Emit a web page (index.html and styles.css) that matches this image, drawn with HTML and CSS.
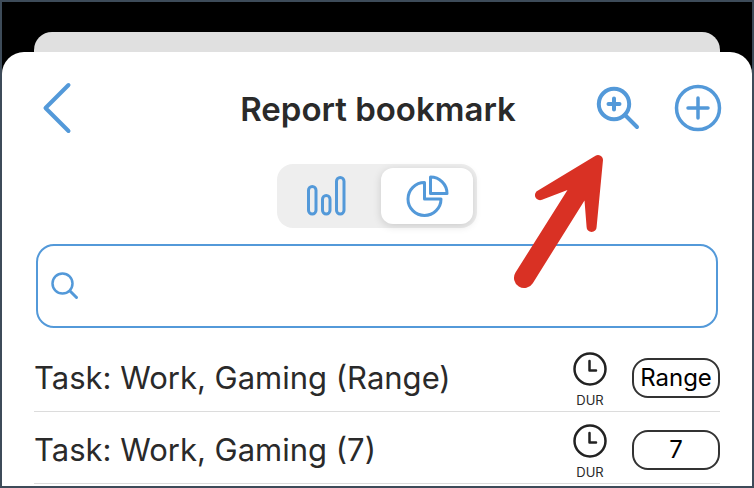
FILE: index.html
```html
<!DOCTYPE html>
<html lang="en">
  <head>
    <meta charset="UTF-8" />
    <meta name="viewport" content="width=device-width, initial-scale=1.0" />
    <title>Report bookmark</title>
    <link rel="stylesheet" href="styles.css">
  </head>
  <body>
    <div class="back-sheet"></div>
    <main class="sheet">
      <header class="header">
        <div class="header-side">
          <button class="icon-btn" aria-label="Back">
            <svg width="44" height="52" viewBox="0 0 44 52"><path d="M34.500 3 11.500 26l23 23" stroke-width="4" /></svg>
          </button>
        </div>
        <h1 class="title">Report bookmark</h1>
        <div class="header-side header-actions">
          <button class="icon-btn" aria-label="Zoom in">
            <svg width="44" height="44" viewBox="0 0 44 44">
              <circle cx="18" cy="18" r="15.200" stroke-width="4" />
              <path d="M18 12.500v11M12.500 18h11M29 29l12 12" stroke-width="4" />
            </svg>
          </button>
          <button class="icon-btn" aria-label="Add">
            <svg width="48" height="48" viewBox="0 0 48 48">
              <circle cx="24" cy="24" r="21.500" stroke-width="3.500" />
              <path d="M24 14v20M14 24h20" stroke-width="3.500" />
            </svg>
          </button>
        </div>
      </header>

      <div class="segment" role="radiogroup" aria-label="Chart type">
        <label class="segment-item">
          <input type="radio" name="chart" aria-label="Bar chart">
          <svg width="44" height="44" viewBox="0 0 44 44">
            <rect x="3.500" y="12.500" width="7.500" height="27.500" rx="3.750" stroke-width="3" />
            <rect x="17.500" y="21.500" width="7.500" height="18.500" rx="3.750" stroke-width="3" />
            <rect x="31.500" y="3.500" width="7.500" height="36.500" rx="3.750" stroke-width="3" />
          </svg>
        </label>
        <label class="segment-item">
          <input type="radio" name="chart" aria-label="Pie chart" checked>
          <svg width="44" height="44" viewBox="0 0 44 44">
            <path d="M19.500 8.500a16.500 16.500 0 1 0 16.500 16.500H19.500z" stroke-width="3" />
            <path d="M25.500 3v16.500h16.500a16.500 16.500 0 0 0-16.500-16.500z" stroke-width="3" />
          </svg>
        </label>
      </div>

      <label class="search">
        <svg width="30" height="30" viewBox="0 0 30 30">
          <circle cx="12.500" cy="12.500" r="10" stroke-width="2.500" />
          <path d="m20 20 6.500 6.500" stroke-width="3" />
        </svg>
        <input type="text" class="search-input" aria-label="Search">
      </label>

      <ul class="list">
        <li class="row">
          <span class="name">Task: Work, Gaming (Range)</span>
          <span class="duration">
            <svg width="36" height="36" viewBox="0 0 36 36">
              <circle cx="18" cy="18" r="15.500" stroke-width="2.500" />
              <path d="M17.500 10v9.500h6.500" stroke-width="2.500" />
            </svg>
            DUR
          </span>
          <button class="badge">Range</button>
        </li>
        <li class="row">
          <span class="name">Task: Work, Gaming (7)</span>
          <span class="duration">
            <svg width="36" height="36" viewBox="0 0 36 36">
              <circle cx="18" cy="18" r="15.500" stroke-width="2.500" />
              <path d="M17.500 10v9.500h6.500" stroke-width="2.500" />
            </svg>
            DUR
          </span>
          <button class="badge">7</button>
        </li>
      </ul>

      <!-- arrow pointing at the zoom button -->
      <svg class="arrow" width="94" height="140" viewBox="512 152 94 140">
        <path d="M595.500 155.700 538 190.600A5 5 0 0 0 542 199.800L567.500 190 515.500 272.500A9.900 9.900 0 0 0 532.800 283.200L584.500 200.500 586.600 227A5 5 0 0 0 596.600 227L603 160A5 5 0 0 0 595.500 155.700Z" />
      </svg>
    </main>
  </body>
</html>
```
FILE: styles.css
```css
* {
  box-sizing: border-box;
}

body {
  display: flex;
  flex-direction: column;
  min-height: 100vh;
  margin: 0;
  padding-top: 30px;
  border: 2px solid #3d4b59;
  background: black;
  color: #2a2a2a;
  font-family: Inter, "Liberation Sans", sans-serif;
}

svg {
  display: block;
  flex-shrink: 0;
  fill: none;
  stroke: #5399d9;
  stroke-linecap: round;
  stroke-linejoin: round;
}

button {
  padding: 0;
  border: none;
  background: none;
  font-family: inherit;
  cursor: pointer;
}

.back-sheet {
  height: 20px;
  margin: 0 32px;
  border-radius: 18px 18px 0 0;
  background: #e0e0e0;
}

.sheet {
  position: relative;
  flex: 1;
  padding: 24px 32px 0;
  border-radius: 22px 22px 0 0;
  background: white;
}

.header {
  display: flex;
  align-items: center;
  height: 64px;
}

.header-side {
  display: flex;
  flex: 1;
}

.header-actions {
  justify-content: flex-end;
  align-items: center;
  gap: 34px;
  margin-right: -2px;
}

.title {
  margin: 0;
  padding-top: 2px;
  font-size: 33px;
  font-weight: 600;
  line-height: 40px;
}

.segment {
  display: flex;
  gap: 8px;
  width: 200px;
  margin: 24px auto 16px;
  padding: 4px;
  border-radius: 16px;
  background: #eeeeee;
}

.segment-item {
  display: flex;
  flex: 1;
  justify-content: center;
  align-items: center;
  height: 56px;
  border-radius: 12px;
  cursor: pointer;
}

.segment-item:has(input:checked) {
  background: white;
  box-shadow: 0 2px 8px rgba(0, 0, 0, 0.15);
}

.segment input {
  position: absolute;
  opacity: 0;
}

.search {
  display: flex;
  align-items: center;
  height: 84px;
  margin: 0 2px 12px;
  padding: 0 12px;
  border: 2px solid #5399d9;
  border-radius: 18px;
}

.search-input {
  flex: 1;
  min-width: 0;
  height: 60px;
  margin-left: 8px;
  border: none;
  outline: none;
  background: none;
  font-family: inherit;
  font-size: 31px;
}

.list {
  margin: 0;
  padding: 0;
  list-style: none;
}

.row {
  display: flex;
  align-items: center;
  height: 72px;
  padding-top: 4px;
  border-bottom: 1px solid #dcdcdc;
}

.name {
  flex: 1;
  font-size: 31px;
  line-height: 40px;
}

.duration {
  display: flex;
  flex-direction: column;
  align-items: center;
  gap: 5px;
  margin-right: 24px;
  padding-top: 4px;
  font-size: 13px;
  line-height: 16px;
}

.duration svg {
  stroke: #222;
}

.badge {
  width: 88px;
  height: 40px;
  border: 2px solid #333;
  border-radius: 16px;
  color: black;
  font-size: 24px;
  line-height: 32px;
}

.arrow {
  position: absolute;
  top: 100px;
  right: 146px;
  fill: #d93124;
  stroke: none;
}
```
